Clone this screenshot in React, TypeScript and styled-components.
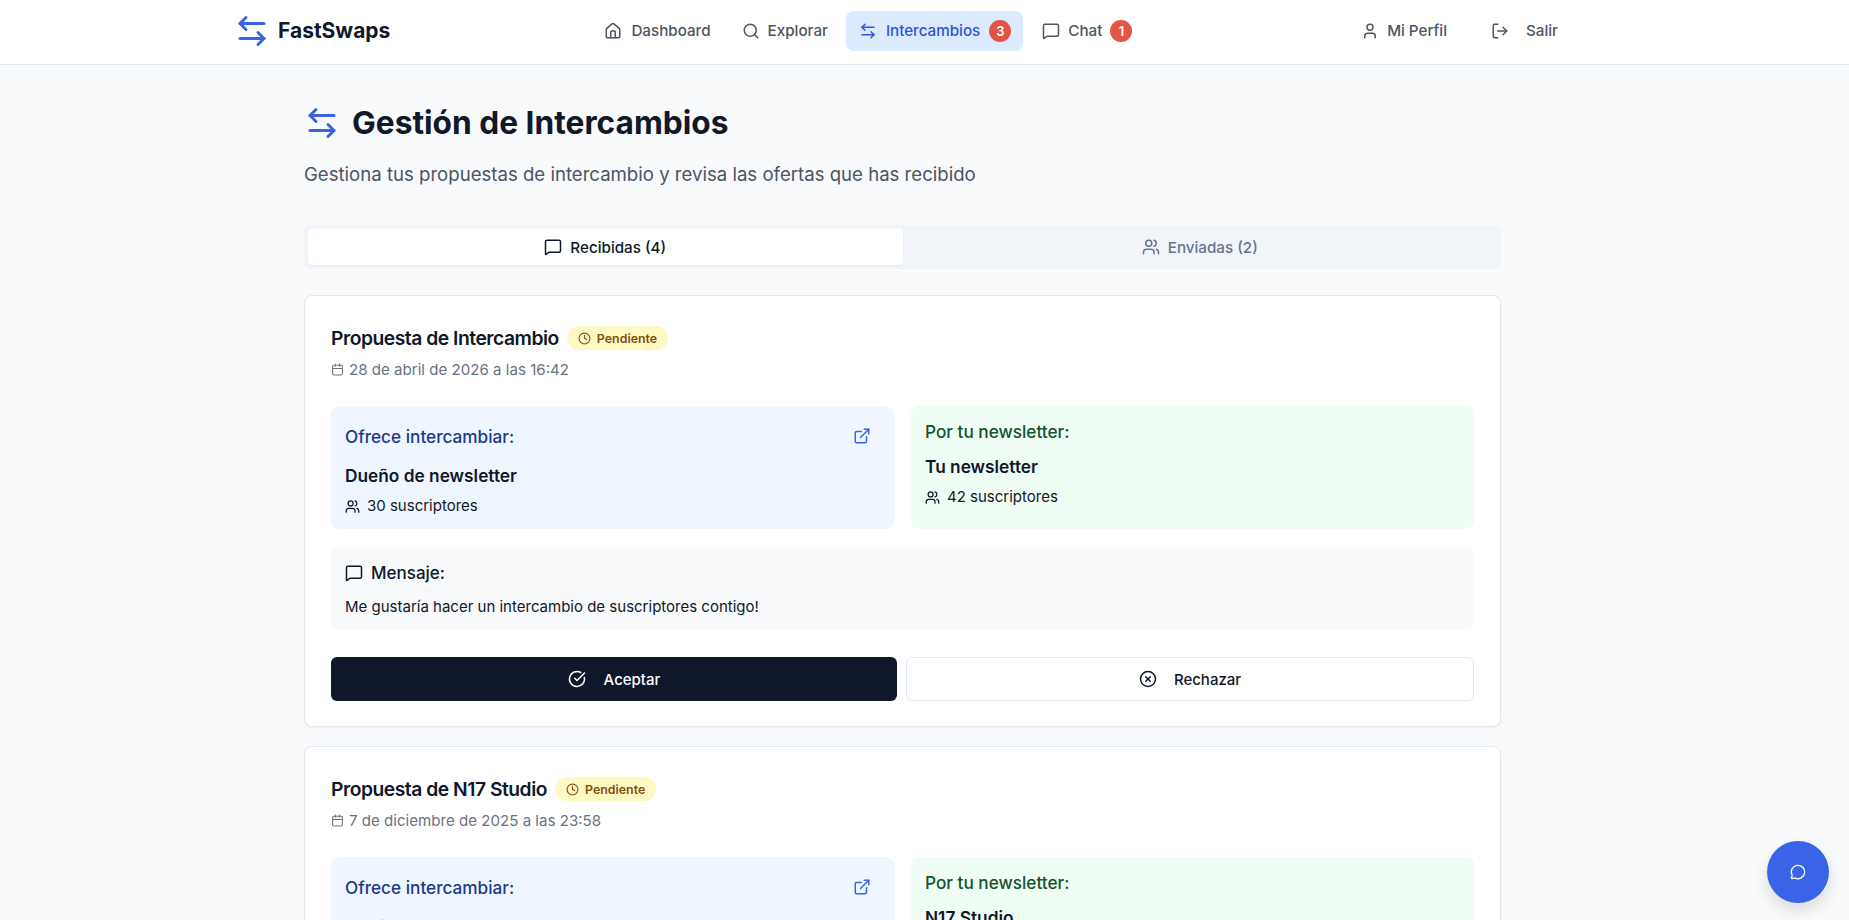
import React from "react";
import styled, { createGlobalStyle } from "styled-components";
import {
  ArrowLeftRight,
  Calendar,
  CircleCheckBig,
  CircleX,
  Clock,
  ExternalLink,
  House,
  LogOut,
  MessageCircle,
  MessageSquare,
  Search,
  User,
  Users,
} from "lucide-react";

const proposals = [
  {
    title: "Propuesta de Intercambio",
    date: "28 de abril de 2026 a las 16:42",
    offerName: "Dueño de newsletter",
    offerSubs: 30,
    myName: "Tu newsletter",
    mySubs: 42,
    message: "Me gustaría hacer un intercambio de suscriptores contigo!",
  },
  {
    title: "Propuesta de N17 Studio",
    date: "7 de diciembre de 2025 a las 23:58",
    offerName: "Dueño de newsletter",
    offerSubs: 30,
    myName: "N17 Studio",
    mySubs: 42,
    message: "Me gustaría hacer un intercambio de suscriptores contigo!",
  },
];

const App = () => {
  return (
    <Page>
      <GlobalStyle />
      <Header>
        <Logo>
          <ArrowLeftRight size={36} strokeWidth={2} color="#3b63e8" />
          <LogoText>FastSwaps</LogoText>
        </Logo>
        <Nav>
          <NavItem>
            <House size={18} />
            Dashboard
          </NavItem>
          <NavItem $gap={8}>
            <Search size={18} />
            Explorar
          </NavItem>
          <NavItem $active>
            <ArrowLeftRight size={18} />
            Intercambios
            <CountBadge>3</CountBadge>
          </NavItem>
          <NavItem $gap={8}>
            <MessageSquare size={18} />
            Chat
            <CountBadge>1</CountBadge>
          </NavItem>
        </Nav>
        <UserNav>
          <NavItem $gap={8}>
            <User size={18} />
            Mi Perfil
          </NavItem>
          <NavItem $gap={17}>
            <LogOut size={18} />
            Salir
          </NavItem>
        </UserNav>
      </Header>

      <Main>
        <TitleRow>
          <ArrowLeftRight size={36} strokeWidth={2} color="#3b63e8" />
          <Title>Gestión de Intercambios</Title>
        </TitleRow>
        <Subtitle>
          Gestiona tus propuestas de intercambio y revisa las ofertas que has
          recibido
        </Subtitle>

        <Tabs>
          <Tab $active>
            <MessageSquare size={18} />
            Recibidas (4)
          </Tab>
          <Tab>
            <Users size={18} />
            Enviadas (2)
          </Tab>
        </Tabs>

        {proposals.map(p => (
          <Card key={p.title}>
            <CardTitleRow>
              <CardTitle>{p.title}</CardTitle>
              <StatusBadge>
                <Clock size={13} />
                Pendiente
              </StatusBadge>
            </CardTitleRow>
            <DateRow>
              <Calendar size={13} />
              {p.date}
            </DateRow>

            <Panels>
              <OfferPanel>
                <OfferHead>
                  <OfferLabel>Ofrece intercambiar:</OfferLabel>
                  <ExternalLink size={18} color="#3b63e8" />
                </OfferHead>
                <PanelName>{p.offerName}</PanelName>
                <Subs>
                  <Users size={15} />
                  {p.offerSubs} suscriptores
                </Subs>
              </OfferPanel>
              <OwnPanel>
                <OwnLabel>Por tu newsletter:</OwnLabel>
                <PanelName>{p.myName}</PanelName>
                <Subs>
                  <Users size={15} />
                  {p.mySubs} suscriptores
                </Subs>
              </OwnPanel>
            </Panels>

            <MessageBox>
              <MessageHead>
                <MessageSquare size={18} />
                Mensaje:
              </MessageHead>
              <MessageText>{p.message}</MessageText>
            </MessageBox>

            <Actions>
              <AcceptButton>
                <CircleCheckBig size={18} />
                Aceptar
              </AcceptButton>
              <RejectButton>
                <CircleX size={18} />
                Rechazar
              </RejectButton>
            </Actions>
          </Card>
        ))}
      </Main>

      <ChatFab>
        <MessageCircle size={16} />
      </ChatFab>
    </Page>
  );
};

export default App;

const GlobalStyle = createGlobalStyle`
  html, body {
    margin: 0;
    padding: 0;
    background: #f9fafb;
  }
  * {
    box-sizing: border-box;
  }
`;

const Page = styled.div`
  min-height: 100vh;
  background: #f9fafb;
  color: #0f172a;
  font-family: Inter, "Liberation Sans", sans-serif;
`;

const Header = styled.header`
  height: 65px;
  display: flex;
  align-items: center;
  padding: 0 279px 3px 234px;
  background: #fff;
  border-bottom: 1px solid #e2e8f0;
`;

const Logo = styled.div`
  display: flex;
  align-items: center;
  gap: 8px;
`;

const LogoText = styled.span`
  font-size: 21px;
  font-weight: 700;
  color: #111827;
`;

const Nav = styled.nav`
  display: flex;
  align-items: center;
  gap: 6px;
  margin-left: 201px;
`;

const UserNav = styled(Nav)`
  gap: 19px;
  margin-left: auto;
`;

const NavItem = styled.a<{ $active?: boolean; $gap?: number }>`
  height: 40px;
  display: flex;
  align-items: center;
  gap: ${props => props.$gap ?? 9}px;
  padding: 0 12px 0 13px;
  border-radius: 8px;
  font-size: 15.2px;
  font-weight: 500;
  color: ${props => (props.$active ? "#2f55dc" : "#4b5563")};
  background: ${props => (props.$active ? "#dbeafe" : "transparent")};
`;

const CountBadge = styled.span`
  width: 22px;
  height: 22px;
  border-radius: 50%;
  display: flex;
  align-items: center;
  justify-content: center;
  background: #e25544;
  color: #fff;
  font-size: 13px;
  font-weight: 600;
`;

const Main = styled.main`
  width: 1197px;
  margin-left: 304px;
  padding: 38px 0 40px;
`;

const TitleRow = styled.div`
  display: flex;
  align-items: center;
  gap: 12px;
  height: 40px;
`;

const Title = styled.h1`
  margin: 0;
  font-size: 31.7px;
  line-height: 40px;
  font-weight: 700;
  color: #111827;
`;

const Subtitle = styled.p`
  margin: 17px 0 0;
  font-size: 18.6px;
  line-height: 28px;
  color: #4b5563;
`;

const Tabs = styled.div`
  display: grid;
  grid-template-columns: 1fr 1fr;
  height: 44px;
  margin-top: 37px;
  padding: 4px;
  border-radius: 6px;
  background: #f1f5f9;
`;

const Tab = styled.div<{ $active?: boolean }>`
  display: flex;
  align-items: center;
  justify-content: center;
  gap: 8px;
  border-radius: 4px;
  font-size: 15.2px;
  font-weight: 500;
  color: ${props => (props.$active ? "#0f172a" : "#64748b")};
  background: ${props => (props.$active ? "#fff" : "transparent")};
  box-shadow: ${props => (props.$active ? "0 1px 2px rgba(0, 0, 0, 0.05)" : "none")};
`;

const Card = styled.section`
  margin-top: 26px;
  padding: 30px 26px 25px;
  background: #fff;
  border: 1px solid #e2e8f0;
  border-radius: 8px;
  box-shadow: 0 1px 2px rgba(0, 0, 0, 0.05);

  & + & {
    margin-top: 19px;
  }
`;

const CardTitleRow = styled.div`
  display: flex;
  align-items: center;
  gap: 8px;
  height: 24px;
`;

const CardTitle = styled.h3`
  margin: 0;
  font-size: 19.3px;
  font-weight: 600;
  letter-spacing: -0.025em;
  color: #0f172a;
`;

const StatusBadge = styled.span`
  height: 24px;
  display: flex;
  align-items: center;
  gap: 6px;
  padding: 0 11px;
  border-radius: 12px;
  background: #fef9c3;
  color: #854d0e;
  font-size: 12.4px;
  font-weight: 600;
`;

const DateRow = styled.div`
  display: flex;
  align-items: center;
  gap: 5px;
  margin-top: 8px;
  height: 22px;
  font-size: 15.1px;
  color: #6b7280;
`;

const Panels = styled.div`
  display: grid;
  grid-template-columns: 1fr 1fr;
  gap: 17px;
  margin-top: 26px;
`;

const OfferPanel = styled.div`
  height: 123px;
  padding: 14px;
  border-radius: 8px;
  background: #eff6ff;
`;

const OwnPanel = styled(OfferPanel)`
  background: #f0fdf4;
`;

const OfferHead = styled.div`
  display: flex;
  align-items: center;
  justify-content: space-between;
  height: 24px;
  margin: 4px 0 16px;
  padding-right: 9px;
`;

const OfferLabel = styled.span`
  font-size: 17.2px;
  font-weight: 500;
  color: #1e3a8a;
`;

const OwnLabel = styled.div`
  height: 24px;
  margin-bottom: 11px;
  font-size: 17.2px;
  line-height: 24px;
  font-weight: 500;
  color: #14532d;
`;

const PanelName = styled.div`
  font-size: 17.3px;
  line-height: 24px;
  font-weight: 600;
  color: #0f172a;
`;

const Subs = styled.div`
  display: flex;
  align-items: center;
  gap: 7px;
  margin-top: 7px;
  font-size: 15px;
  line-height: 22px;
  color: #111827;
`;

const MessageBox = styled.div`
  margin-top: 18px;
  height: 83px;
  padding: 14px;
  border-radius: 8px;
  background: #f9fafb;
`;

const MessageHead = styled.div`
  display: flex;
  align-items: center;
  gap: 8px;
  height: 24px;
  font-size: 17px;
  font-weight: 500;
`;

const MessageText = styled.p`
  margin: 11px 0 0;
  font-size: 15px;
  line-height: 22px;
  color: #0f172a;
`;

const Actions = styled.div`
  display: grid;
  grid-template-columns: 566px 1fr;
  gap: 9px;
  margin-top: 27px;
`;

const AcceptButton = styled.button`
  height: 44px;
  display: flex;
  align-items: center;
  justify-content: center;
  gap: 18px;
  border: 0;
  border-radius: 6px;
  background: #0f172a;
  color: #fff;
  font-family: inherit;
  font-size: 15px;
  font-weight: 500;
`;

const RejectButton = styled(AcceptButton)`
  gap: 17px;
  background: #fff;
  color: #0f172a;
  border: 1px solid #e2e8f0;
`;

const ChatFab = styled.button`
  position: fixed;
  right: 20px;
  bottom: 17px;
  width: 62px;
  height: 62px;
  display: flex;
  align-items: center;
  justify-content: center;
  border: 0;
  border-radius: 50%;
  background: #3b63e8;
  color: #fff;
  box-shadow: 0 8px 16px rgba(0, 0, 0, 0.12);
`;
